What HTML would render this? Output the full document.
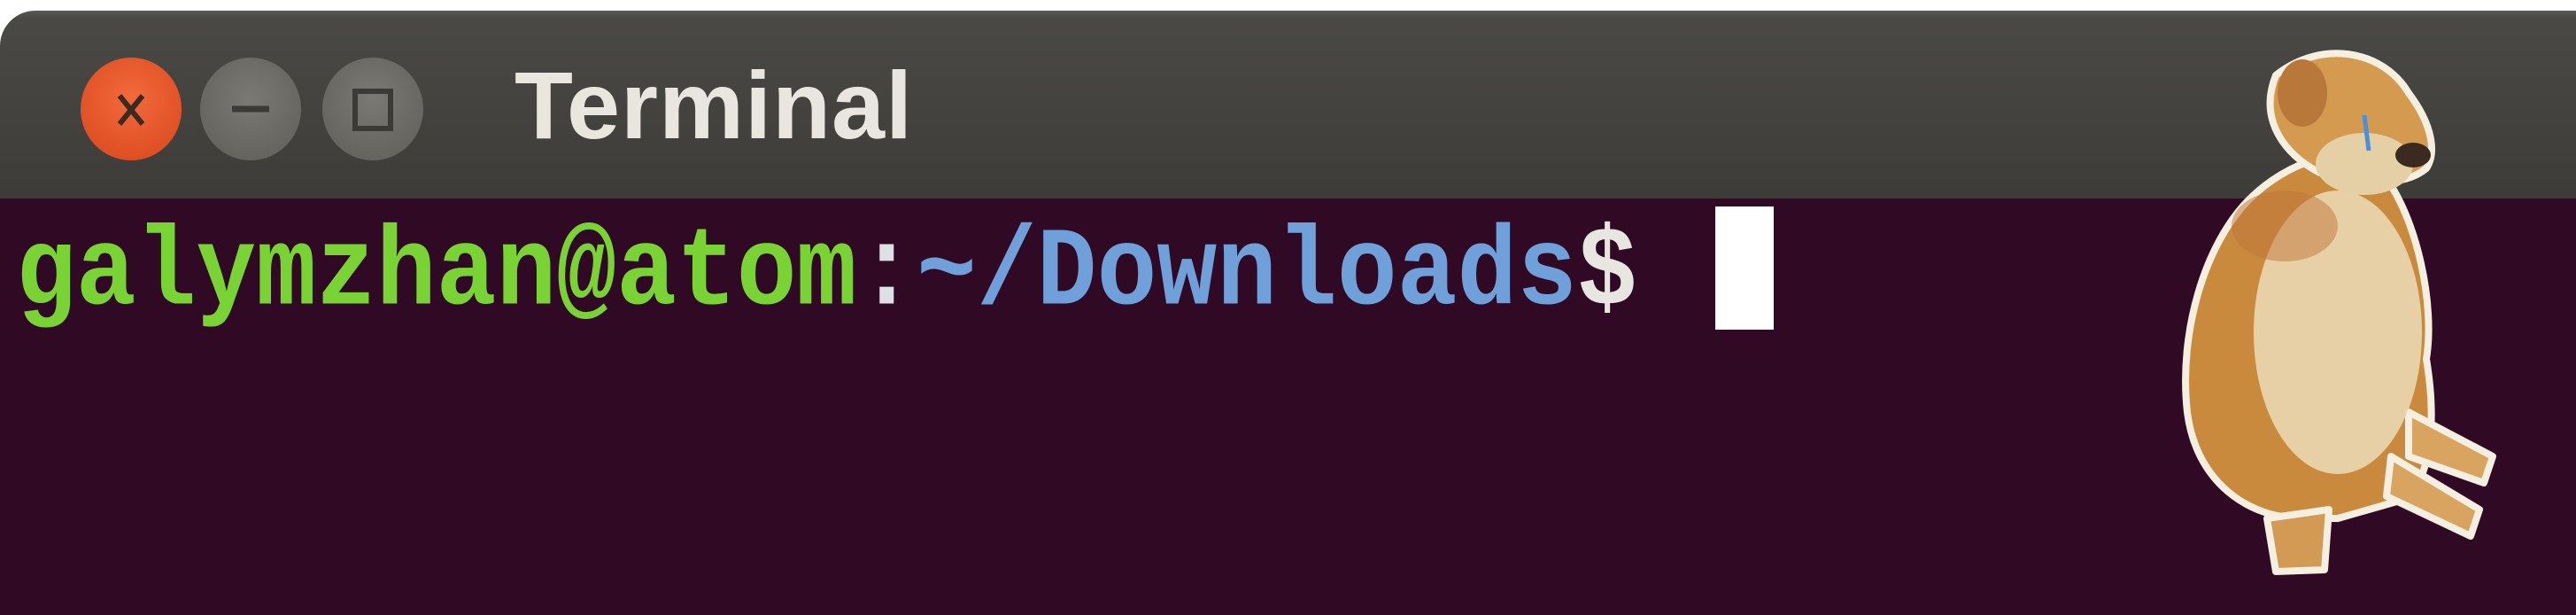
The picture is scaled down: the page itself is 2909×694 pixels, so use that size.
<!DOCTYPE html>
<html><head><meta charset="utf-8"><style>
html,body{margin:0;padding:0;width:2909px;height:694px;overflow:hidden;background:#fff;position:relative}
.tb{position:absolute;left:0;top:12px;width:2909px;height:212px;background:linear-gradient(#5a5955 0,#4a4945 8px,#3d3c38 100%);border-top-left-radius:40px}
.term{position:absolute;left:0;top:224px;width:2909px;height:470px;background:#300a24}
.btn{position:absolute;width:114px;height:116px;border-radius:50%;top:65px}
.title{position:absolute;left:581px;top:56px;font:bold 108px "Liberation Sans",sans-serif;color:#e8e6df;letter-spacing:1px}
.prompt{position:absolute;left:18px;top:246px;font:bold 113px "Liberation Mono",monospace;white-space:pre;transform:scaleY(1.12);transform-origin:0 0;line-height:1}
.cur{position:absolute;left:1937px;top:233px;width:66px;height:139px;background:#fff}
</style></head><body>
<div class="tb"></div>
<div class="term"></div>
<div class="btn" style="left:91px;background:radial-gradient(circle at 50% 40%,#f26a3c,#d8461c);"></div>
<div class="btn" style="left:226px;background:radial-gradient(circle at 50% 40%,#7a7974,#5e5d58);"></div>
<div class="btn" style="left:364px;background:radial-gradient(circle at 50% 40%,#7a7974,#5e5d58);"></div>
<svg style="position:absolute;left:0;top:0" width="600" height="224">
<path d="M135 108 L161 140 M161 108 L135 140" stroke="#3a2a22" stroke-width="6"/>
<path d="M262 123 H304" stroke="#3a3a36" stroke-width="7"/>
<rect x="401" y="103" width="40" height="42" fill="none" stroke="#3a3a36" stroke-width="6"/>
</svg>
<div class="title">Terminal</div>
<div class="prompt"><span style="color:#7ad334">galymzhan@atom</span><span style="color:#dfe0e6">:</span><span style="color:#6fa0da">~/Downloads</span><span style="color:#e8e6e0">$</span></div>
<div class="cur"></div>
<svg style="position:absolute;left:2450px;top:45px" width="420" height="620" viewBox="0 0 420 620">
<g stroke="#f4efe0" stroke-width="8" stroke-linejoin="round">
<path d="M90 180 C40 230 10 330 20 420 C30 500 90 540 150 540 L190 540 L260 520 C300 500 300 420 290 360 C300 300 280 200 240 150 C200 110 130 140 90 180 Z" fill="#c98a3e"/>
<path d="M110 540 L120 600 L175 598 L180 530 Z" fill="#d29a55"/>
<path d="M270 420 L365 470 L355 500 L270 470 Z" fill="#d8a460"/>
<path d="M250 470 L350 530 L340 560 L245 515 Z" fill="#d8a460"/>
<path d="M120 40 C170 0 240 10 270 60 C300 100 300 130 290 145 C260 170 200 160 170 150 C130 130 100 90 120 40 Z" fill="#d49a50"/>
</g>
<ellipse cx="190" cy="330" rx="95" ry="160" fill="#ead7b0" opacity=".9"/>
<ellipse cx="220" cy="140" rx="55" ry="35" fill="#e5cfa4"/>
<ellipse cx="150" cy="60" rx="28" ry="38" fill="#b8783a"/>
<ellipse cx="275" cy="130" rx="20" ry="14" fill="#3a2a20"/>
<path d="M220 85 L225 125" stroke="#4a90d8" stroke-width="5"/>
<ellipse cx="130" cy="210" rx="60" ry="40" fill="#c0743a" opacity=".5"/>
</svg>
</body></html>
